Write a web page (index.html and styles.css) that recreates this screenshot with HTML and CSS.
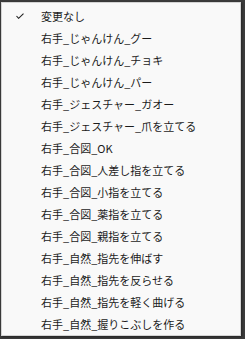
FILE: index.html
```html
<!DOCTYPE html>
<html>
<head>
    <title>Menu</title>
    <link rel="stylesheet" href="styles.css">
</head>
<body>
    <div class="menu">
        <ul class="menu-list">
            <li class="menu-item checked">
                <span class="check">
                    <svg width="8" height="6" viewBox="0 0 8 6"><polyline points="0.5,3 2.6,5.3 7.5,0.6" fill="none" stroke="#222" stroke-width="1.1"/></svg>
                </span>
                <span class="label">変更なし</span>
            </li>
            <li class="menu-item"><span class="check"></span><span class="label">右手_じゃんけん_グー</span></li>
            <li class="menu-item"><span class="check"></span><span class="label">右手_じゃんけん_チョキ</span></li>
            <li class="menu-item"><span class="check"></span><span class="label">右手_じゃんけん_パー</span></li>
            <li class="menu-item"><span class="check"></span><span class="label">右手_ジェスチャー_ガオー</span></li>
            <li class="menu-item"><span class="check"></span><span class="label">右手_ジェスチャー_爪を立てる</span></li>
            <li class="menu-item"><span class="check"></span><span class="label">右手_合図_OK</span></li>
            <li class="menu-item"><span class="check"></span><span class="label">右手_合図_人差し指を立てる</span></li>
            <li class="menu-item"><span class="check"></span><span class="label">右手_合図_小指を立てる</span></li>
            <li class="menu-item"><span class="check"></span><span class="label">右手_合図_薬指を立てる</span></li>
            <li class="menu-item"><span class="check"></span><span class="label">右手_合図_親指を立てる</span></li>
            <li class="menu-item"><span class="check"></span><span class="label">右手_自然_指先を伸ばす</span></li>
            <li class="menu-item"><span class="check"></span><span class="label">右手_自然_指先を反らせる</span></li>
            <li class="menu-item"><span class="check"></span><span class="label">右手_自然_指先を軽く曲げる</span></li>
            <li class="menu-item"><span class="check"></span><span class="label">右手_自然_握りこぶしを作る</span></li>
        </ul>
    </div>
</body>
</html>
```
FILE: styles.css
```css
body {
    margin: 0;
    padding: 0;
    background-color: #3b3b3b;
    font-family: "Noto Sans CJK JP", "Noto Sans", sans-serif;
    height: 339px;
    overflow: hidden;
}

.menu {
    margin-top: 2px;
    margin-left: 1px;
    width: 238px;
    height: 332px;
    background-color: #f9f9f9;
    border: 1px solid #d4d4d4;
    box-shadow: 1px 1px 2px rgba(0, 0, 0, 0.4);
}

.menu-list {
    list-style: none;
    margin: 0;
    padding: 2px 0 0;
}

.menu-item {
    display: flex;
    align-items: center;
    height: 22px;
    color: #1b1b1b;
    font-size: 11px;
}

.check {
    display: flex;
    align-items: center;
    width: 39px;
    padding-left: 14px;
    box-sizing: border-box;
}
```
